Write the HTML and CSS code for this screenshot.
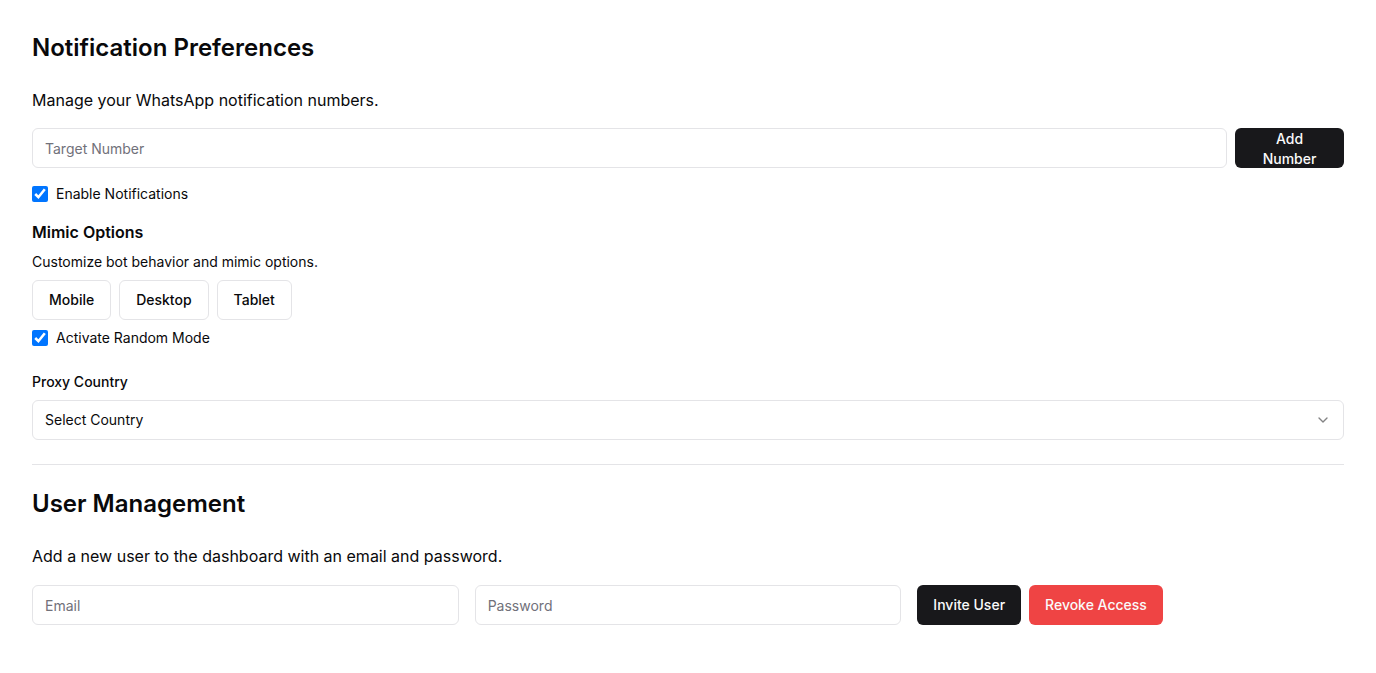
FILE: index.html
```html
<!DOCTYPE html>
<html lang="en">
<head>
<meta charset="utf-8">
<title>Settings</title>
<link rel="stylesheet" href="styles.css">
</head>
<body>
<main class="page">
  <section class="section">
    <h2 class="title">Notification Preferences</h2>
    <p class="lead">Manage your WhatsApp notification numbers.</p>
    <div class="number-row">
      <input class="input" type="text" placeholder="Target Number">
      <button class="btn btn-dark btn-wrap">Add Number</button>
    </div>
    <label class="check"><input type="checkbox" checked><span>Enable Notifications</span></label>

    <h3 class="subtitle">Mimic Options</h3>
    <p class="small">Customize bot behavior and mimic options.</p>
    <div class="btn-group">
      <button class="btn btn-outline">Mobile</button>
      <button class="btn btn-outline">Desktop</button>
      <button class="btn btn-outline">Tablet</button>
    </div>
    <label class="check check-tight"><input type="checkbox" checked><span>Activate Random Mode</span></label>

    <div class="field">
      <span class="label">Proxy Country</span>
      <div class="select">
        <span>Select Country</span>
        <svg class="chev" width="16" height="16" viewBox="0 0 24 24" fill="none" stroke="currentColor" stroke-width="2" stroke-linecap="round" stroke-linejoin="round"><path d="m6 9 6 6 6-6"/></svg>
      </div>
    </div>
  </section>

  <hr class="divider">

  <section class="section">
    <h2 class="title">User Management</h2>
    <p class="lead">Add a new user to the dashboard with an email and password.</p>
    <div class="user-grid">
      <input class="input" type="email" placeholder="Email">
      <input class="input" type="password" placeholder="Password">
      <div class="actions">
        <button class="btn btn-dark btn-act">Invite User</button>
        <button class="btn btn-red btn-act">Revoke Access</button>
      </div>
    </div>
  </section>
</main>
</body>
</html>
```

FILE: styles.css
```css
* { box-sizing: border-box; }
html, body { margin: 0; padding: 0; background: #ffffff; }
body {
  font-family: Inter, "Noto Sans", sans-serif;
  color: #09090b;
  -webkit-font-smoothing: antialiased;
}
.page { padding: 32px; }
.section { display: flex; flex-direction: column; }
.title {
  margin: 0;
  font-size: 24px;
  line-height: 32px;
  font-weight: 600;
}
.lead {
  margin: 24px 0 0;
  font-size: 16px;
  line-height: 24px;
}
.number-row {
  display: flex;
  gap: 8px;
  margin-top: 16px;
}
.input {
  height: 40px;
  flex: 1;
  min-width: 0;
  border: 1px solid #e4e4e7;
  border-radius: 6px;
  padding: 8px 12px;
  font: inherit;
  font-size: 14px;
  color: #09090b;
  background: #fff;
  outline: none;
}
.input::placeholder { color: #71717a; }
.btn {
  height: 40px;
  border-radius: 6px;
  padding: 0 16px;
  font-family: inherit;
  font-size: 14px;
  font-weight: 500;
  line-height: 20px;
  border: 1px solid transparent;
  cursor: pointer;
  white-space: nowrap;
}
.btn-dark { background: #18181b; color: #fafafa; }
.btn-red { background: #ef4444; color: #fafafa; }
.btn-outline { background: #fff; color: #09090b; border-color: #e4e4e7; }
.btn-wrap { width: 109px; flex: 0 0 109px; white-space: normal; padding: 0 12px 2px; }
.btn-act { padding: 0 15px; }
.check {
  display: flex;
  align-items: center;
  gap: 8px;
  margin-top: 16px;
  font-size: 14px;
  line-height: 20px;
}
.check input {
  width: 16px;
  height: 16px;
  margin: 0;
}
.check-tight { margin-top: 8px; }
.subtitle {
  margin: 16px 0 0;
  font-size: 16px;
  line-height: 24px;
  font-weight: 600;
}
.small {
  margin: 8px 0 0;
  font-size: 14px;
  line-height: 20px;
}
.btn-group {
  display: flex;
  gap: 8px;
  margin-top: 8px;
}
.field {
  display: flex;
  flex-direction: column;
  gap: 8px;
  margin-top: 24px;
}
.label {
  font-size: 14px;
  line-height: 20px;
  font-weight: 500;
}
.select {
  height: 40px;
  border: 1px solid #e4e4e7;
  border-radius: 6px;
  padding: 0 12px 1px;
  display: flex;
  align-items: center;
  justify-content: space-between;
  font-size: 14px;
}
.chev { color: #09090b; opacity: 0.5; }
.divider {
  border: 0;
  border-top: 1px solid #e4e4e7;
  margin: 24px 0 23px;
}
.user-grid {
  display: grid;
  grid-template-columns: 1fr 1fr 1fr;
  gap: 16px;
  margin-top: 17px;
}
.actions { display: flex; gap: 8px; }
```
